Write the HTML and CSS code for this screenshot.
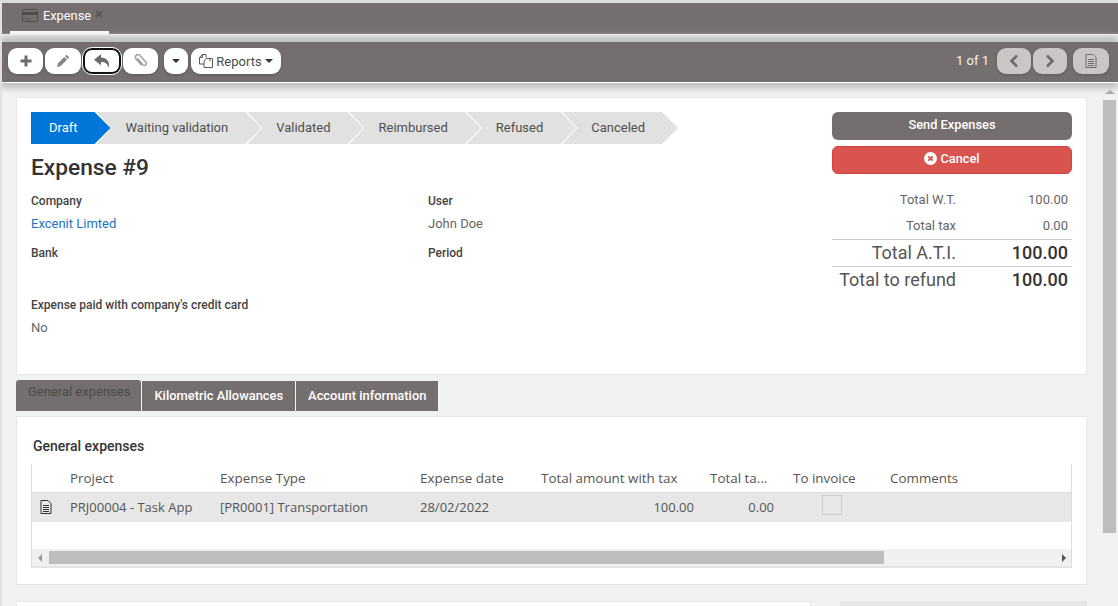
FILE: index.html
```html
<!DOCTYPE html>
<html>
<head>
  <title>Expense</title>
  <link rel="stylesheet" href="styles.css">
</head>
<body>
  <div class="tabbar">
    <div class="view-tab">
      <svg class="card-icon" viewBox="0 0 16 13"><path d="M1.5.5h13a1 1 0 0 1 1 1v10a1 1 0 0 1-1 1h-13a1 1 0 0 1-1-1v-10a1 1 0 0 1 1-1z" fill="none" stroke="#4f4a4a"/><path d="M1 3h14v3H1z" fill="#4f4a4a"/><path d="M2.5 10h3M6.500 10h2" stroke="#4f4a4a"/></svg>
      <span class="view-title">Expense</span>
      <svg class="view-close" viewBox="0 0 8 8"><path d="M1 1l6 6M7 1L1 7" stroke="#5a5555" stroke-width="2.200"/></svg>
    </div>
  </div>

  <div class="toolbar">
    <div class="btn-group">
      <button class="tool tool-add"><svg viewBox="0 0 12 12"><path d="M6 .5v11M.5 6h11" stroke="#6f6969" stroke-width="3"/></svg></button>
      <button class="tool tool-edit"><svg viewBox="0 0 12 12"><path d="M0 12l.7-3.400L7.300 2l2.700 2.700L3.400 11.300zM8.100 1.200L9.200.1a.5.500 0 0 1 .7 0l2 2a.5.500 0 0 1 0 .7l-1.100 1.100z" fill="#8a8484"/></svg></button>
      <button class="tool tool-back"><svg viewBox="0 0 19 14"><path d="M8.500 0L1 5.800l7.500 5.800V8c4 0 6.500 1.300 8.500 6 .6-6.500-2.500-10.200-8.500-10.600z" fill="#6f6969"/></svg></button>
      <button class="tool tool-attach"><svg viewBox="0 0 14 14"><path d="M3.300 4.800l5.600 6.400a1.900 1.900 0 0 0 3-2.500L6 2a2.600 2.600 0 0 0-4.100 3.200l5.700 6.600" fill="none" stroke="#a3a0a0" stroke-width="1.500" transform="translate(0 -.5)"/></svg></button>
    </div>
    <button class="tool tool-caret"><span class="caret"></span></button>
    <button class="tool tool-reports">
      <svg viewBox="0 0 14 14"><path d="M3.500.5h3.500v3M3.500.5L.5 3.500V10h4.500M3.500.5v3h-3M11 4.500v3M7 4.500H13.500V13.500H5V7z" fill="none" stroke="#5f5a5a"/></svg>
      <span>Reports</span> <span class="caret"></span>
    </button>
    <div class="pager">
      <span class="pager-text">1 of 1</span>
      <button class="tool tool-dim tool-prev"><svg viewBox="0 0 10 14"><path d="M8 1.500L2.500 7 8 12.500" fill="none" stroke="#6f6969" stroke-width="2.600"/></svg></button>
      <button class="tool tool-dim tool-next"><svg viewBox="0 0 10 14"><path d="M2 1.500L7.500 7 2 12.500" fill="none" stroke="#6f6969" stroke-width="2.600"/></svg></button>
      <button class="tool tool-dim tool-doc"><svg viewBox="0 0 12 14"><path d="M1 .5h7l3 3v10H1zM3 5.500h6M3 7.500h6M3 9.500h6M3 11.500h6" fill="none" stroke="#6f6969"/></svg></button>
    </div>
  </div>

  <div class="page">
    <div class="content">
      <div class="panel form-panel">
        <div class="form-main">
          <div class="steps">
            <div class="step step-active">Draft</div>
            <div class="step">Waiting validation</div>
            <div class="step">Validated</div>
            <div class="step">Reimbursed</div>
            <div class="step">Refused</div>
            <div class="step">Canceled</div>
          </div>
          <h1 class="form-title">Expense #9</h1>
          <div class="fields">
            <div class="field">
              <label>Company</label>
              <a class="value link">Excenit Limted</a>
            </div>
            <div class="field">
              <label>User</label>
              <span class="value">John Doe</span>
            </div>
            <div class="field">
              <label>Bank</label>
            </div>
            <div class="field">
              <label>Period</label>
            </div>
            <div class="field field-wide">
              <label>Expense paid with company's credit card</label>
              <span class="value">No</span>
            </div>
          </div>
        </div>
        <div class="form-side">
          <button class="action action-send">Send Expenses</button>
          <button class="action action-cancel">
            <svg viewBox="0 0 12 12"><circle cx="6" cy="6" r="6" fill="#fff"/><path d="M4 4l4 4M8 4l-4 4" stroke="#d9534f" stroke-width="1.800"/></svg>
            Cancel
          </button>
          <div class="totals">
            <div class="total-row"><span class="total-label">Total W.T.</span><span class="total-value">100.00</span></div>
            <div class="total-row total-tax"><span class="total-label">Total tax</span><span class="total-value">0.00</span></div>
            <div class="total-row total-big"><span class="total-label">Total A.T.I.</span><span class="total-value">100.00</span></div>
            <div class="total-row total-big"><span class="total-label">Total to refund</span><span class="total-value">100.00</span></div>
          </div>
        </div>
      </div>

      <div class="tabs">
        <div class="tab tab-active">General expenses</div>
        <div class="tab">Kilometric Allowances</div>
        <div class="tab">Account information</div>
      </div>

      <div class="panel grid-panel">
        <div class="grid-title">General expenses</div>
        <div class="grid">
          <div class="grid-row grid-head">
            <div class="cell"></div>
            <div class="cell">Project</div>
            <div class="cell">Expense Type</div>
            <div class="cell">Expense date</div>
            <div class="cell">Total amount with tax</div>
            <div class="cell">Total ta...</div>
            <div class="cell cell-invoice">To invoice</div>
            <div class="cell">Comments</div>
          </div>
          <div class="grid-row grid-line">
            <div class="cell cell-icon"><svg viewBox="0 0 12 14"><path d="M1 .5h7l3 3v10H1zM3 5.500h6M3 7.500h6M3 9.500h6M3 11.500h6" fill="none" stroke="#333"/></svg></div>
            <div class="cell">PRJ00004 - Task App</div>
            <div class="cell">[PR0001] Transportation</div>
            <div class="cell">28/02/2022</div>
            <div class="cell cell-num">100.00</div>
            <div class="cell cell-num">0.00</div>
            <div class="cell cell-check"><span class="checkbox"></span></div>
            <div class="cell"></div>
          </div>
          <div class="grid-empty"></div>
          <div class="hscroll">
            <span class="arrow arrow-left"></span>
            <div class="hscroll-track"><div class="hscroll-thumb"></div></div>
            <span class="arrow arrow-right"></span>
          </div>
        </div>
      </div>

      <div class="bottom-panels">
        <div class="panel bottom-left"></div>
        <div class="bottom-right"></div>
      </div>
    </div>

    <div class="vscroll">
      <span class="arrow arrow-up"></span>
      <div class="vscroll-thumb"></div>
    </div>
  </div>
</body>
</html>
```

FILE: styles.css
```css
* {
  box-sizing: border-box;
}

html, body {
  height: 100%;
}

body {
  margin: 0;
  overflow: hidden;
  font-family: Roboto, "Liberation Sans", sans-serif;
  font-size: 13px;
  color: #333;
  background-color: #f2f2f2;
  border-left: 2px solid #e0e0e0;
}

button {
  font-family: inherit;
  border: none;
  padding: 0;
}

.tabbar {
  height: 35px;
  margin-left: -2px;
  border-top: 3px solid #dcdcdc;
  border-bottom: 1px solid #fff;
  background-color: #756e6e;
  padding-left: 10px;
}

.view-tab {
  display: flex;
  align-items: flex-start;
  width: 99px;
  height: 31px;
  padding: 6px 0 0 12px;
  border-bottom: 3px solid #fff;
}

.card-icon {
  width: 16px;
  height: 13px;
}

.view-title {
  margin-left: 5px;
  margin-top: -1px;
  color: #fff;
  font-size: 12.800px;
  line-height: 16px;
}

.view-close {
  width: 8px;
  height: 8px;
  margin-left: 4px;
  margin-top: 1px;
}

.toolbar {
  display: flex;
  align-items: center;
  height: 41px;
  margin-left: -2px;
  margin-top: 7px;
  padding: 0 9px 2px 8px;
  background-color: #756e6e;
  border-bottom: 1px solid #fff;
  box-shadow: 0 -6px 6px #c0c0c0, 0 5px 7px #bbb;
  position: relative;
}

.btn-group {
  display: flex;
  gap: 2px;
}

.tool {
  display: flex;
  align-items: center;
  justify-content: center;
  height: 26px;
  border-radius: 9px;
  background-color: #fff;
  box-shadow: 0 1px 3px rgba(0, 0, 0, 0.2);
}

.tool svg {
  display: block;
}

.tool-add {
  width: 35px;
}

.tool-add svg {
  width: 12px;
  height: 12px;
}

.tool-edit {
  width: 36px;
}

.tool-edit svg {
  width: 12px;
  height: 12px;
}

.tool-back {
  width: 38px;
  border: 2px solid #111;
  outline: 1px solid #fff;
}

.tool-back svg {
  width: 18px;
  height: 14px;
}

.tool-attach {
  width: 35px;
}

.tool-attach svg {
  width: 14px;
  height: 14px;
}

.tool-caret {
  width: 24px;
  margin-left: 6px;
}

.tool-reports {
  width: 90px;
  margin-left: 3px;
  gap: 3px;
  font-size: 13px;
  color: #4b4b4b;
}

.tool-reports svg {
  width: 14px;
  height: 14px;
}

.caret {
  display: inline-block;
  width: 0;
  height: 0;
  border-top: 4px solid #333;
  border-left: 4px solid transparent;
  border-right: 4px solid transparent;
}

.pager {
  display: flex;
  align-items: center;
  margin-left: auto;
}

.pager-text {
  margin-right: 8px;
  margin-bottom: 2px;
  color: #f2f2f2;
  font-size: 13px;
}

.tool-dim {
  background-color: #cac6c6;
}

.tool-prev, .tool-next {
  width: 34px;
}

.tool-next {
  margin-left: 2px;
}

.tool-prev svg, .tool-next svg {
  width: 10px;
  height: 14px;
}

.tool-doc {
  width: 36px;
  margin-left: 6px;
}

.tool-doc svg {
  width: 12px;
  height: 14px;
}

.page {
  display: flex;
  height: 523px;
}

.content {
  flex: 1;
  padding: 14px 15px 0 14px;
  overflow: hidden;
}

.panel {
  background-color: #fff;
  border: 1px solid #e6e6e6;
}

.form-panel {
  display: flex;
  height: 278px;
  padding: 14px 14px 0 14px;
}

.form-main {
  width: 801px;
}

.steps {
  display: flex;
}

.step {
  height: 32px;
  line-height: 31px;
  margin-left: -14px;
  padding: 0 33px 0 29px;
  color: #4f4f4f;
  background-color: #e1e1e1;
  clip-path: polygon(0 0, calc(100% - 16px) 0, 100% 50%, calc(100% - 16px) 100%, 0 100%, 15px 50%);
}

.step-active {
  margin-left: 0;
  padding: 0 33px 0 18px;
  color: #fff;
  background-color: #0275d8;
  clip-path: polygon(0 0, calc(100% - 16px) 0, 100% 50%, calc(100% - 16px) 100%, 0 100%);
}

.form-title {
  margin: 10px 0 0;
  height: 28px;
  font-size: 22.700px;
  line-height: 28px;
  font-weight: 500;
  color: #333;
}

.fields {
  display: grid;
  grid-template-columns: 397px 1fr;
  grid-auto-rows: 52px;
  margin-top: 8px;
}

.field {
  display: flex;
  flex-direction: column;
}

.field-wide {
  grid-column: 1 / 3;
}

.field label {
  height: 22px;
  line-height: 23px;
  font-size: 12px;
  font-weight: 500;
  color: #444;
}

.value {
  height: 23px;
  line-height: 23px;
  color: #666;
}

.link {
  color: #1a76c4;
}

.form-side {
  width: 240px;
}

.action {
  display: flex;
  align-items: center;
  justify-content: center;
  gap: 3px;
  width: 100%;
  height: 28px;
  margin-bottom: 6px;
  border-radius: 6px;
  color: #fff;
  font-size: 12.800px;
  font-weight: 500;
  padding-bottom: 3px;
}

.action-send {
  background-color: #756e6e;
}

.action-cancel {
  background-color: #d9534f;
  border: 1px solid #d43f3a;
}

.action-cancel svg {
  width: 13px;
  height: 13px;
}

.totals {
  margin-top: 12px;
}

.total-row {
  display: flex;
  align-items: center;
  height: 26px;
  padding-right: 4px;
  color: #666;
}

.total-tax {
  height: 27px;
  padding-bottom: 1px;
}

.total-label {
  width: 124px;
  text-align: right;
}

.total-value {
  flex: 1;
  text-align: right;
}

.total-big {
  height: 27px;
  padding-bottom: 2px;
  border-top: 1px solid #ccc;
  font-size: 18px;
  color: #555;
  font-weight: 400;
}

.total-big .total-value {
  color: #333;
  font-weight: 500;
}

.tabs {
  display: flex;
  gap: 1px;
  align-items: flex-end;
  height: 31px;
  margin-top: 5px;
}

.tab {
  height: 30px;
  line-height: 29px;
  padding: 0 12px;
  background-color: #756e6e;
  color: #fff;
  font-size: 12.900px;
  font-weight: 500;
}

.tab-active {
  height: 31px;
  line-height: 24px;
  padding: 0 11px 0 12px;
  border-radius: 3px 3px 0 0;
  color: #4a4a4a;
  font-size: 13px;
  font-weight: 400;
}

.grid-panel {
  height: 169px;
  margin-top: 5px;
  padding: 0 14px;
}

.grid-title {
  height: 47px;
  padding: 20px 0 0 2px;
  font-size: 14px;
  line-height: 18px;
  font-weight: 500;
}

.grid {
  height: 104px;
  border-left: 1px solid #ddd;
  border-right: 1px solid #ddd;
  border-bottom: 2px solid #e4e4e4;
  font-family: "Open Sans", "Noto Sans", sans-serif;
  color: #555;
}

.grid-row {
  display: grid;
  grid-template-columns: 30px 150px 200px 121px 169px 80px 100px 1fr;
  align-items: center;
}

.grid-head {
  height: 29px;
  border-bottom: 1px solid #dcdcdc;
  font-size: 13.400px;
}

.grid-line {
  height: 29px;
  padding-bottom: 1px;
  background-color: #e7e7e7;
}

.cell {
  padding: 0 8px;
  white-space: nowrap;
}

.cell-invoice {
  padding-left: 11px;
}

.cell-num {
  text-align: right;
}

.cell-icon {
  padding: 0 0 0 8px;
}

.cell-icon svg {
  display: block;
  width: 12px;
  height: 14px;
}

.cell-check {
  display: flex;
  justify-content: center;
  align-self: start;
  margin-top: 2px;
}

.checkbox {
  display: block;
  width: 20px;
  height: 20px;
  border: 1px solid #ccc;
  background-color: #e7e7e7;
}

.grid-empty {
  height: 27px;
}

.hscroll {
  display: flex;
  align-items: center;
  height: 17px;
  background-color: #f0f0f0;
}

.hscroll-track {
  flex: 1;
}

.hscroll-thumb {
  width: 835px;
  height: 13px;
  margin-left: 3px;
  background-color: #bdbdbd;
}

.arrow {
  display: block;
  width: 0;
  height: 0;
  border: 4px solid transparent;
}

.arrow-left {
  margin: 0 4px 0 6px;
  border-left: 0;
  border-right-color: #999;
}

.arrow-right {
  margin: 0 5px 0 6px;
  border-right: 0;
  border-left-color: #505050;
}

.arrow-up {
  margin: 7px auto 6px;
  border-top: 0;
  border-left-width: 5px;
  border-right-width: 5px;
  border-bottom-color: #aaa;
}

.bottom-panels {
  display: flex;
  justify-content: space-between;
  margin-top: 16px;
}

.bottom-left {
  width: 795px;
  height: 40px;
}

.bottom-right {
  width: 247px;
  height: 40px;
  background-color: #e6e6e6;
}

.vscroll {
  width: 16px;
  background-color: #f1f1f1;
}

.vscroll-thumb {
  width: 13px;
  height: 433px;
  margin-left: 1px;
  background-color: #bdbdbd;
}
```
